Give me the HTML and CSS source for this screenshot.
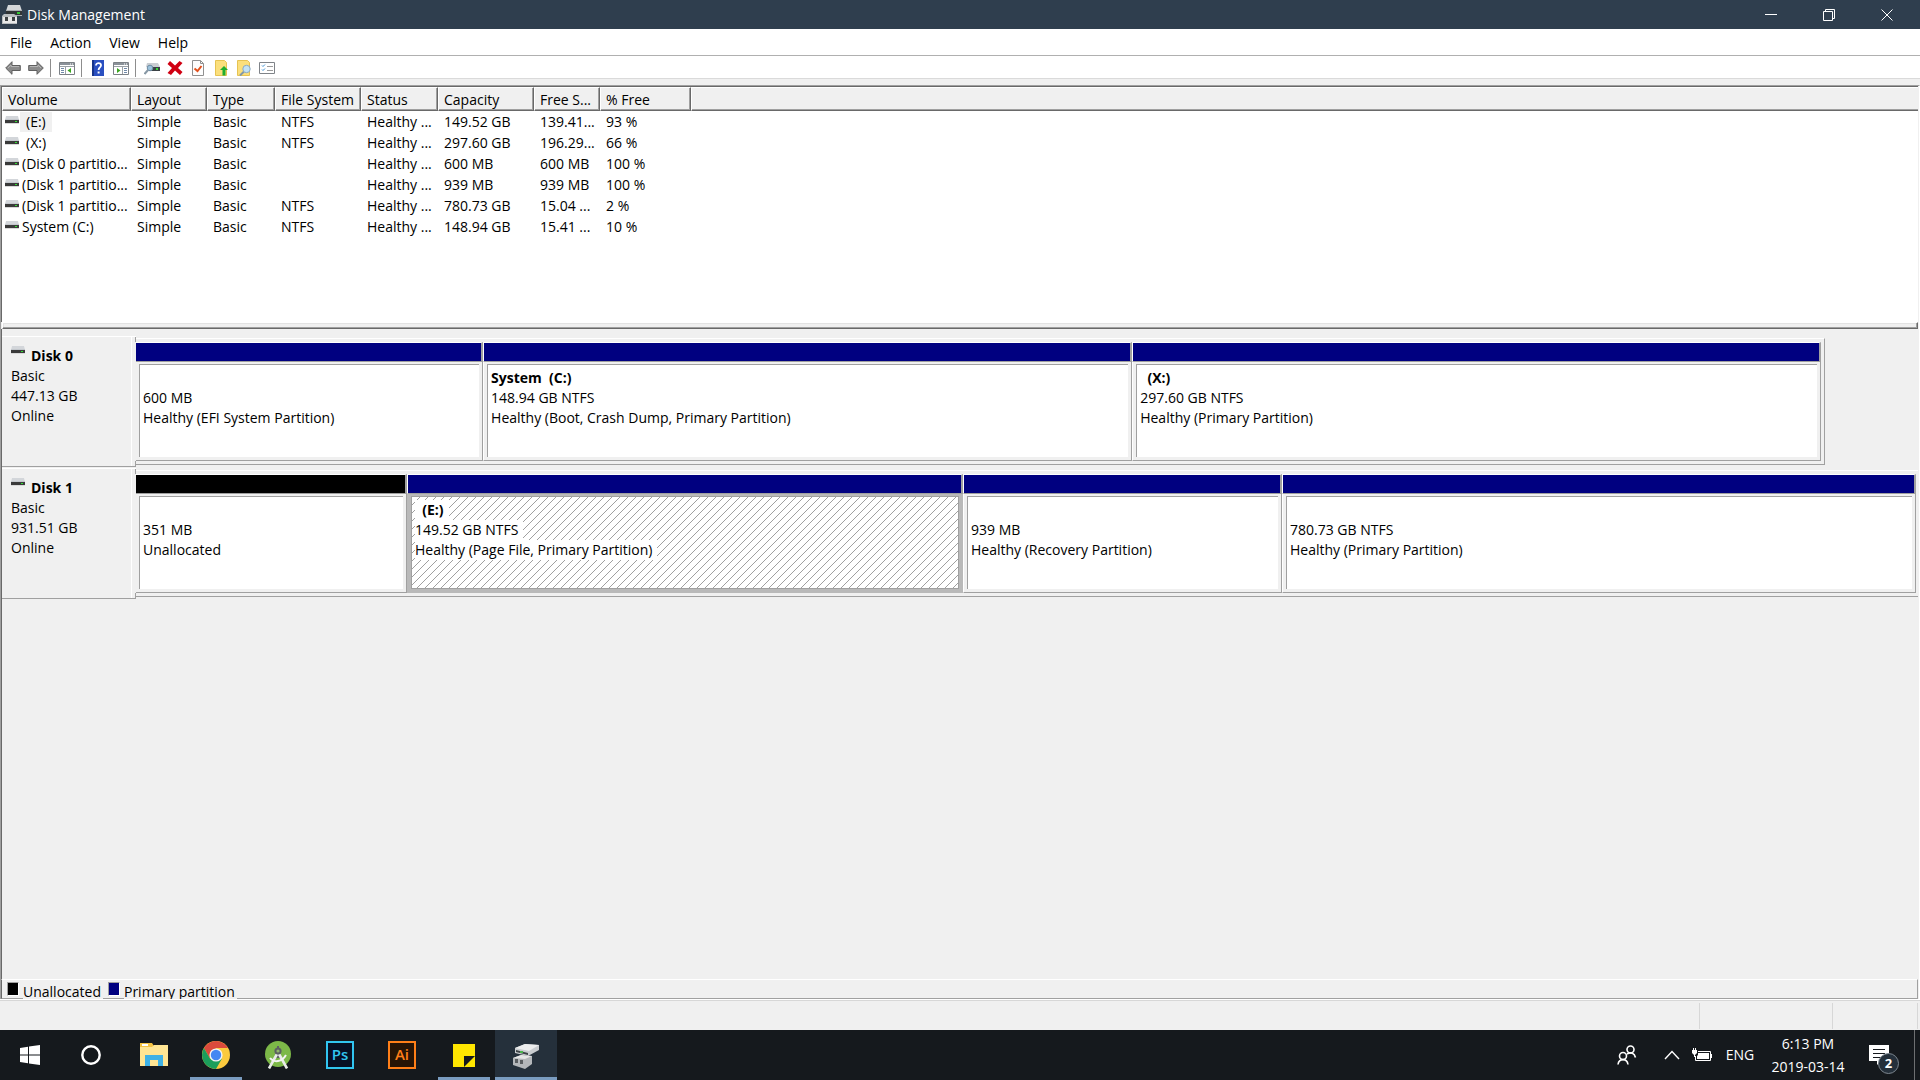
FILE: index.html
```
<!DOCTYPE html>
<html lang="en">

<head>
	<meta charset="utf-8">
	<title>Disk Management</title>
	<link rel="stylesheet" href="styles.css">
</head>

<body>

	<!-- shared drive icon -->
	<svg class="sprite" aria-hidden="true">
		<symbol id="drive" viewBox="0 0 14 8">
			<path d="M1 0h12l1 4H0z" fill="#d3d6da"/>
			<path d="M0 3h14v4H0z" fill="#3a3a3a"/>
			<path d="M0 3h14v1H0z" fill="#c4c8cd"/>
			<path d="M0 7h14v1H0z" fill="#d9d9d9"/>
			<path d="M10 5h2v1h-2z" fill="#32e032"/>
		</symbol>
	</svg>

	<header class="titlebar">
		<svg class="app-icon" viewBox="0 0 20 20">
			<path d="M6 0h12l2 6H4z" fill="#d4d7da"/>
			<path d="M4 5h16v5H4z" fill="#303436"/>
			<path d="M4 5h16v1H4zM14 10h6v1h-6z" fill="#a9adb0"/>
			<path d="M15 7h3v2h-3z" fill="#35c435"/>
			<path d="M2 9h10l3 2v8H0v-8z" fill="#b9bdc0"/>
			<path d="M1 12h14v6H1z" fill="#e8e8e8"/>
			<path d="M3 12h3v4H3zM10 12h3v4h-3z" fill="#3d4143"/>
		</svg>
		<h1>Disk Management</h1>
		<div class="win-controls">
			<button aria-label="Minimize"><svg viewBox="0 0 12 12"><path d="M0 5.5h12"/></svg></button>
			<button aria-label="Restore"><svg viewBox="0 0 12 12"><path d="M.5 2.500h9v9h-9zM2.500 2.500v-2h9v9h-2"/></svg></button>
			<button aria-label="Close"><svg viewBox="0 0 12 12"><path d="M.5.5l11 11M11.500.5l-11 11"/></svg></button>
		</div>
	</header>

	<nav class="menu">
		<button>File</button>
		<button>Action</button>
		<button>View</button>
		<button>Help</button>
	</nav>

	<div class="toolbar">
		<button aria-label="Back"><svg viewBox="0 0 16 16"><path d="M.7 8L7 1.700v3.800h8.300v5H7v3.800z" fill="#8c8c8c" stroke="#5f5f5f"/><path d="M3 8l3-3v1.500h8" fill="none" stroke="#b5b5b5"/></svg></button>
		<button aria-label="Forward"><svg viewBox="0 0 16 16"><path d="M15.300 8L9 1.700v3.800H.7v5H9v3.800z" fill="#8c8c8c" stroke="#5f5f5f"/><path d="M2 6.500h8V5l3 3" fill="none" stroke="#b5b5b5"/></svg></button>
		<span class="sep"></span>
		<button aria-label="Show or hide console tree"><svg viewBox="0 0 16 16"><path d="M.5 2.500h15v12H.5z" fill="#fff" stroke="#7c8186"/><path d="M1 3h14v2H1z" fill="#8b9299"/><path d="M1 6.500h14M6.500 7v7" stroke="#9aa0a6"/><path d="M2 8.500h3M2 10.500h3M2 12.500h3" stroke="#7189a8"/><path d="M12 8v5L8.500 10.500z" fill="#3aa520"/><path d="M11 4h1M13 4h1" stroke="#fff"/></svg></button>
		<span class="sep"></span>
		<button aria-label="Help"><svg viewBox="0 0 16 16"><path d="M2 0h12v16H2z" fill="#2a4fc0"/><path d="M2 0h2v16H2z" fill="#173489"/><path d="M6 5.500c0-3.500 5.500-3 5 0C10.800 7.500 8.600 7.500 8.600 10" fill="none" stroke="#fff" stroke-width="1.800"/><path d="M7.600 11.500h2v2h-2z" fill="#fff"/></svg></button>
		<button aria-label="Show or hide action pane"><svg viewBox="0 0 16 16"><path d="M.5 2.500h15v12H.5z" fill="#fff" stroke="#7c8186"/><path d="M1 3h14v2H1z" fill="#8b9299"/><path d="M1 6.500h14M9.500 7v7" stroke="#9aa0a6"/><path d="M11 8.500h3M11 10.500h3M11 12.500h3" stroke="#7189a8"/><path d="M4 8v5l3.500-2.500z" fill="#3aa520"/><path d="M11 4h1M13 4h1" stroke="#fff"/></svg></button>
		<span class="sep"></span>
		<button aria-label="Refresh"><svg viewBox="0 0 16 16"><path d="M3 3h11l2 4H2z" fill="#c9cdd2"/><path d="M5 7h11v4H5z" fill="#3b4145"/><path d="M12 8h2v2h-2z" fill="#36db36"/><circle cx="6" cy="8" r="2.800" fill="#9cc2dc" stroke="#6e8ca3"/><path d="M4 10l-3.500 4" stroke="#8798a5" stroke-width="2"/></svg></button>
		<button aria-label="Delete"><svg viewBox="0 0 16 16"><path d="M3 1l5 4.500L12.500 1l3 2L11 8l4.500 4-2.500 3-5-4.500L4 15l-3.500-2L5 8 .5 4z" fill="#d00012"/></svg></button>
		<button aria-label="Properties"><svg viewBox="0 0 16 16"><path d="M2.500.5h8l3 3v12h-11z" fill="#fdfdfd" stroke="#909090"/><path d="M10.500.5v3h3" fill="none" stroke="#909090"/><path d="M4.500 8.500l3 2.500 4-5" fill="none" stroke="#e2501c" stroke-width="2"/></svg></button>
		<button aria-label="Up"><svg viewBox="0 0 16 16"><path d="M2.500.5h9l2 2v13h-11z" fill="#fbdf7c" stroke="#e6c352"/><path d="M11 6l4 4h-2.500v5.500h-3V10H7z" fill="#1fae2d"/></svg></button>
		<button aria-label="Explore"><svg viewBox="0 0 16 16"><path d="M1.500.5h10l2 2v13h-12z" fill="#fbdf7c" stroke="#e6c352"/><path d="M8 11.500L4 15.500" stroke="#8298a8" stroke-width="2"/><circle cx="10.500" cy="9" r="3.700" fill="#c2e2f5" stroke="#8ba9bf"/></svg></button>
		<button aria-label="Settings list"><svg viewBox="0 0 16 16"><path d="M.5 2.500h15v11H.5z" fill="#fff" stroke="#7f8388"/><path d="M3 5.500l1 1 2-2M3 9.500l1 1 2-2" fill="none" stroke="#3d8fd1"/><path d="M8 6.500h6M8 10.500h6" stroke="#9a9a9a"/></svg></button>
	</div>

	<main class="console">

		<section class="volumes">
			<table>
				<colgroup>
					<col class="c-volume">
					<col class="c-layout">
					<col class="c-type">
					<col class="c-fs">
					<col class="c-status">
					<col class="c-capacity">
					<col class="c-space">
					<col class="c-free">
					<col>
				</colgroup>
				<thead>
					<tr><th>Volume</th><th>Layout</th><th>Type</th><th>File System</th><th>Status</th><th>Capacity</th><th>Free S...</th><th>% Free</th><th class="rest"></th></tr>
				</thead>
				<tbody>
					<tr><td><svg class="drive"><use href="#drive"/></svg><span class="letter selected">(E:)</span></td><td>Simple</td><td>Basic</td><td>NTFS</td><td>Healthy ...</td><td>149.52 GB</td><td>139.41...</td><td>93 %</td><td></td></tr>
					<tr><td><svg class="drive"><use href="#drive"/></svg><span class="letter">(X:)</span></td><td>Simple</td><td>Basic</td><td>NTFS</td><td>Healthy ...</td><td>297.60 GB</td><td>196.29...</td><td>66 %</td><td></td></tr>
					<tr><td><svg class="drive"><use href="#drive"/></svg><span>(Disk 0 partitio...</span></td><td>Simple</td><td>Basic</td><td></td><td>Healthy ...</td><td>600 MB</td><td>600 MB</td><td>100 %</td><td></td></tr>
					<tr><td><svg class="drive"><use href="#drive"/></svg><span>(Disk 1 partitio...</span></td><td>Simple</td><td>Basic</td><td></td><td>Healthy ...</td><td>939 MB</td><td>939 MB</td><td>100 %</td><td></td></tr>
					<tr><td><svg class="drive"><use href="#drive"/></svg><span>(Disk 1 partitio...</span></td><td>Simple</td><td>Basic</td><td>NTFS</td><td>Healthy ...</td><td>780.73 GB</td><td>15.04 ...</td><td>2 %</td><td></td></tr>
					<tr><td><svg class="drive"><use href="#drive"/></svg><span>System (C:)</span></td><td>Simple</td><td>Basic</td><td>NTFS</td><td>Healthy ...</td><td>148.94 GB</td><td>15.41 ...</td><td>10 %</td><td></td></tr>
				</tbody>
			</table>
		</section>

		<div class="splitter"></div>

		<section class="disks">

			<div class="disk">
				<div class="disk-label">
					<h2><svg class="drive"><use href="#drive"/></svg>Disk 0</h2>
					<p>Basic</p>
					<p>447.13 GB</p>
					<p>Online</p>
				</div>
				<div class="track">
					<div class="graph" style="width:94.8%">
						<div class="partition" style="flex-grow:347">
							<div class="bar"></div>
							<div class="body"><div class="info"><h3></h3><p>600 MB</p><p>Healthy (EFI System Partition)</p></div></div>
						</div>
						<div class="partition" style="flex-grow:649">
							<div class="bar"></div>
							<div class="body"><div class="info"><h3>System&nbsp; (C:)</h3><p>148.94 GB NTFS</p><p>Healthy (Boot, Crash Dump, Primary Partition)</p></div></div>
						</div>
						<div class="partition" style="flex-grow:689">
							<div class="bar"></div>
							<div class="body"><div class="info"><h3>&nbsp; (X:)</h3><p>297.60 GB NTFS</p><p>Healthy (Primary Partition)</p></div></div>
						</div>
					</div>
				</div>
			</div>

			<div class="disk">
				<div class="disk-label">
					<h2><svg class="drive"><use href="#drive"/></svg>Disk 1</h2>
					<p>Basic</p>
					<p>931.51 GB</p>
					<p>Online</p>
				</div>
				<div class="track">
					<div class="graph full">
						<div class="partition unallocated" style="flex-grow:271">
							<div class="bar"></div>
							<div class="body"><div class="info"><h3></h3><p>351 MB</p><p>Unallocated</p></div></div>
						</div>
						<div class="partition active" style="flex-grow:556">
							<div class="bar"></div>
							<div class="body"><div class="info"><h3>&nbsp; (E:)</h3><p>149.52 GB NTFS</p><p>Healthy (Page File, Primary Partition)</p></div></div>
						</div>
						<div class="partition" style="flex-grow:319">
							<div class="bar"></div>
							<div class="body"><div class="info"><h3></h3><p>939 MB</p><p>Healthy (Recovery Partition)</p></div></div>
						</div>
						<div class="partition" style="flex-grow:634">
							<div class="bar"></div>
							<div class="body"><div class="info"><h3></h3><p>780.73 GB NTFS</p><p>Healthy (Primary Partition)</p></div></div>
						</div>
					</div>
				</div>
			</div>

		</section>

		<div class="legend">
			<i class="swatch black"></i><span>Unallocated</span>
			<i class="swatch navy"></i><span>Primary partition</span>
		</div>

	</main>

	<div class="statusbar">
		<span class="s-main"></span>
		<span class="s-mid"></span>
		<span class="s-end"></span>
	</div>

	<footer class="taskbar">
		<button class="task" aria-label="Start"><svg viewBox="0 0 28 28"><path d="M4 7l8-1.200V13.500H4zM13 5.600L24 4v9.500H13zM4 14.500h8v7.700L4 21zM13 14.500h11V24l-11-1.600z" fill="#fff"/></svg></button>
		<button class="task" aria-label="Cortana"><svg viewBox="0 0 28 28"><circle cx="13" cy="14" r="8.700" fill="none" stroke="#fff" stroke-width="2.400"/></svg></button>
		<button class="task" aria-label="File Explorer"><svg viewBox="0 0 28 28"><path d="M0 2h12l2 3h14v20H0z" fill="#f5c342"/><path d="M2 3h6v2H2z" fill="#fff"/><path d="M0 6h12l2-2h14v21H0z" fill="#ffe593"/><path d="M5 25V14h18v11h-5v-6h-8v6z" fill="#3fb1e5"/></svg></button>
		<button class="task running" aria-label="Chrome"><svg viewBox="0 0 28 28"><circle cx="14" cy="14" r="14" fill="#fbca3e"/><path d="M1.900 7A14 14 0 0 1 26.100 7H14L8 17.500z" fill="#db4a3c"/><path d="M1.900 7A14 14 0 0 0 14 28l6-10.500H8z" fill="#1b9e5b"/><circle cx="14" cy="14" r="6.600" fill="#f3f3f3"/><circle cx="14" cy="14" r="5.200" fill="#4387f2"/></svg></button>
		<button class="task" aria-label="Android Studio"><svg viewBox="0 0 28 28"><circle cx="14" cy="13" r="13" fill="#7cb848"/><path d="M12 12h4l2 5h-8z" fill="#5c6062"/><path d="M13 13L5 27.500M15 13l8 14.500" stroke="#e9ece9" stroke-width="2.600"/><path d="M6 17c4 5 12 4 16-3" fill="none" stroke="#f4f4f4" stroke-width="2"/><path d="M13 5h2v3h-2z" fill="#5c6062"/><circle cx="14" cy="10" r="2.600" fill="#8fb56c" stroke="#5c6062" stroke-width="2"/></svg></button>
		<button class="task" aria-label="Photoshop"><span class="adobe ps">Ps</span></button>
		<button class="task" aria-label="Illustrator"><span class="adobe ai">Ai</span></button>
		<button class="task running" aria-label="Sticky Notes"><svg viewBox="0 0 28 28"><path d="M3 3h22v23H3z" fill="#ffe600"/><path d="M14 15h11L14 26z" fill="#15191d"/></svg></button>
		<button class="task running current" aria-label="Disk Management"><svg viewBox="0 0 28 28"><path d="M3 7L13 3l14 1v5l-11 6L3 12z" fill="#c9cccf"/><path d="M3 7l10-4 14 1-10 6z" fill="#eceded"/><path d="M4 9l12 3v2L4 11z" fill="#3d4447"/><path d="M8 10h3v2H8z" fill="#48b54a"/><path d="M1 17l8-3 11 1v8l-7 5-12-4z" fill="#b4b7ba"/><path d="M1 17l8-3 11 1-7 3z" fill="#e6e6e6"/><path d="M3 18h3v4H3zM8 19h3v4H8z" fill="#5a5e61"/></svg></button>

		<div class="tray">
			<button class="people" aria-label="People"><svg viewBox="0 0 20 20"><g fill="none" stroke="#fff" stroke-width="1.600"><circle cx="13.500" cy="4.500" r="3.500"/><path d="M10 9c4-2.500 7.500-.5 8.500 3.500"/><circle cx="6" cy="11" r="3.500"/><path d="M1 19.500c1-6.500 9-6.500 10 0"/></g></svg></button>
			<button class="chevron" aria-label="Show hidden icons"><svg viewBox="0 0 16 10"><path d="M1 9l7-7.500L15 9" fill="none" stroke="#fff" stroke-width="1.400"/></svg></button>
			<button class="battery" aria-label="Battery"><svg viewBox="0 0 20 14"><path d="M6 3.500h12.500v9h-15V8" fill="none" stroke="#fff"/><path d="M6 5h11v6H5V8l1-1zM19 6h1v4h-1z" fill="#fff"/><path d="M1 0h1v2h1V0h1v2h1v3L3 7v2H2V7L0 5V2h1z" fill="#fff"/></svg></button>
			<button class="lang">ENG</button>
			<button class="clock"><time>6:13 PM</time><time>2019-03-14</time></button>
			<button class="notes" aria-label="Notifications">
				<svg viewBox="0 0 20 20"><path d="M0 0h20v16h-8l-4 4v-4H0z" fill="#fff"/><path d="M4 4.500h12M4 8.500h12M4 12.500h8" stroke="#15191d"/></svg>
				<span class="badge">2</span>
			</button>
			<span class="desktop"></span>
		</div>
	</footer>

</body>

</html>
```
FILE: styles.css
```
* {
	box-sizing: border-box;
}

body {
	margin: 0;
	height: 100vh;
	display: flex;
	flex-direction: column;
	background: #f0f0f0;
	color: #000;
	font-family: "Open Sans", "Noto Sans", sans-serif;
	font-size: 14px;
	line-height: 20px;
	overflow: hidden;
}

h1, h2, h3, p {
	margin: 0;
	font-size: inherit;
}

button {
	border: none;
	padding: 0;
	background: none;
	color: inherit;
	font: inherit;
}

svg {
	display: block;
}

.sprite {
	position: absolute;
	width: 0;
	height: 0;
}

.drive {
	width: 14px;
	height: 8px;
	flex: none;
}

/* title bar */

.titlebar {
	display: flex;
	align-items: center;
	height: 29px;
	flex: none;
	padding-left: 2px;
	background: #2f3e4e;
	color: #fff;
}

.titlebar h1 {
	font-weight: normal;
	margin-left: 5px;
}

.app-icon {
	width: 20px;
	height: 20px;
}

.win-controls {
	display: flex;
	margin-left: auto;
	padding-right: 4px;
}

.win-controls button {
	width: 58px;
	height: 29px;
	display: flex;
	align-items: center;
	justify-content: center;
}

.win-controls svg {
	width: 12px;
	height: 12px;
	fill: none;
	stroke: #fff;
}

/* menu and toolbar */

.menu {
	display: flex;
	flex: none;
	gap: 18px;
	height: 27px;
	padding: 1px 10px 0;
	background: #fff;
	border-bottom: 1px solid #b0b0b0;
}

.toolbar {
	display: flex;
	flex: none;
	align-items: center;
	height: 23px;
	padding: 2px 0 0 1px;
	background: #fff;
	border-bottom: 1px solid #dadada;
}

.toolbar button {
	width: 23px;
	display: flex;
	justify-content: center;
}

.toolbar svg {
	width: 16px;
	height: 16px;
}

.sep {
	width: 1px;
	height: 18px;
	margin: 0 4px 0 3px;
	background: #8d8d8d;
}

/* volume list */

.console {
	flex: 1;
	display: flex;
	flex-direction: column;
	margin-top: 6px;
	border-top: 1px solid #a0a0a0;
	border-left: 1px solid #a0a0a0;
	border-right: 1px solid #fff;
	padding-right: 1px;
}

.volumes {
	height: 236px;
	flex: none;
	background: #fff;
	border-top: 1px solid #696969;
	border-left: 1px solid #696969;
}

table {
	width: 100%;
	table-layout: fixed;
	border-collapse: separate;
	border-spacing: 0;
}

.c-volume { width: 129px; }
.c-layout { width: 76px; }
.c-type { width: 68px; }
.c-fs { width: 86px; }
.c-status { width: 77px; }
.c-capacity { width: 96px; }
.c-space { width: 66px; }
.c-free { width: 91px; }

th {
	height: 24px;
	padding: 2px 0 0 5px;
	background: #f0f0f0;
	border: 1px solid;
	border-color: #fff #696969 #696969 #fff;
	box-shadow: inset -1px -1px #a0a0a0;
	font-weight: normal;
	text-align: left;
	white-space: nowrap;
}

th.rest {
	border-right: none;
	box-shadow: inset 0 -1px #a0a0a0;
}

td {
	height: 21px;
	padding: 0 0 0 6px;
	white-space: nowrap;
}

td:first-child {
	padding-left: 3px;
}

td .drive {
	display: inline-block;
	vertical-align: 3px;
	margin-right: 1px;
}

td span {
	display: inline-block;
	padding: 0 2px;
}

td .letter {
	padding: 0 6px;
}

.selected {
	background: #f0f0f0;
}

.splitter {
	height: 7px;
	flex: none;
	margin-left: 1px;
	border: 1px solid #fff;
	border-color: #fff #696969 #696969 #fff;
	box-shadow: inset -1px -1px #a0a0a0, inset 1px 1px #e3e3e3;
}

/* disks */

.disks {
	flex: 1;
	padding-top: 7px;
	border-left: 1px solid #696969;
}

.disk {
	display: flex;
	height: 132px;
}

.disk-label {
	width: 134px;
	height: 131px;
	flex: none;
	padding: 9px 0 0 9px;
	border-top: 1px solid #fff;
	border-bottom: 1px solid #a0a0a0;
	background:
		linear-gradient(#a0a0a0, #a0a0a0) right top / 1px 5px no-repeat,
		linear-gradient(#a0a0a0, #a0a0a0) right bottom / 1px 5px no-repeat,
		linear-gradient(#fff, #fff) 129px 0 / 1px 100% no-repeat;
}

.disk-label h2 {
	display: flex;
	gap: 6px;
}

.track {
	flex: 1;
	min-width: 0;
}

.graph {
	display: flex;
	height: 127px;
	margin-top: 2px;
	padding: 3px 3px 3px 0;
	border-top: 1px solid #fff;
	border-right: 1px solid #a0a0a0;
	border-bottom: 1px solid #a0a0a0;
}

.graph.full {
	padding-right: 2px;
	border-right: none;
}

.partition {
	flex: 0 1 0;
	min-width: 0;
	display: flex;
	flex-direction: column;
	white-space: nowrap;
}

.bar {
	height: 20px;
	background: #000080;
	border-top: 1px solid #fff;
	border-right: 2px solid #a0a0a0;
	border-left: 1px solid #fff;
	border-bottom: 1px solid #a0a0a0;
}

.unallocated .bar {
	background: #000;
}

.body {
	flex: 1;
	padding: 2px 3px 3px;
	border-right: 1px solid #a0a0a0;
	border-bottom: 1px solid #a0a0a0;
	border-left: 1px solid #fff;
}

.partition:first-child .bar,
.partition:first-child .body {
	border-left: none;
}

.info {
	height: 100%;
	padding: 3px 3px 0;
	overflow: hidden;
	background: #fff;
	border-top: 1px solid #a0a0a0;
	border-left: 1px solid #a0a0a0;
}

.info h3 {
	height: 20px;
}

.active .body {
	background: #b9b9b9;
	border-color: #b9b9b9;
}

.active .info {
	border: 1px solid #a0a0a0;
	background: #fff linear-gradient(135deg, #fff 46%, #a0a0a0 46%, #a0a0a0 54%, #fff 54%) 0 0 / 8px 8px;
}

.active h3, .active p {
	width: fit-content;
	padding-right: 5px;
	background: #fff;
}

/* legend and status */

.legend {
	display: flex;
	flex: none;
	height: 20px;
	padding-left: 5px;
	border: 1px solid;
	border-color: #fff #a0a0a0 #a0a0a0 #696969;
}

.legend span {
	height: 20px;
	margin: 1px 5px 0 4px;
	padding-right: 2px;
	line-height: 22px;
	background: #f0f0f0;
}

.swatch {
	width: 12px;
	height: 14px;
	margin-top: 2px;
	border: 1px solid;
	border-color: #a0a0a0 #fff #fff #a0a0a0;
}

.black { background: #000; }
.navy { background: #000080; }

.statusbar {
	display: flex;
	flex: none;
	height: 31px;
	padding: 3px 2px 1px 0;
	border-top: 1px solid #fff;
	box-shadow: inset 0 1px #d7d7d7;
}

.statusbar span {
	border-right: 1px solid #d7d7d7;
}

.s-main { flex: 1; }
.s-mid { width: 133px; }
.s-end { width: 85px; }

/* taskbar */

.taskbar {
	display: flex;
	flex: none;
	height: 50px;
	background: #15191d;
	color: #fff;
}

.task {
	width: 52px;
	margin-right: 10px;
	display: flex;
	align-items: center;
	justify-content: center;
	border-bottom: 3px solid transparent;
	padding-top: 2px;
}

.task:first-child {
	margin-left: 4px;
}

.task svg {
	width: 28px;
	height: 28px;
}

.running {
	border-bottom-color: #7a9cc0;
}

.current {
	width: 62px;
	margin: 0 0 0 -5px;
	background: #25303b;
}

.adobe {
	width: 28px;
	height: 28px;
	border: 2px solid;
	font-size: 15px;
	font-weight: 600;
	line-height: 23px;
	text-align: center;
}

.ps {
	color: #31c5f0;
	background: #071024;
}

.ai {
	color: #ff7f18;
	background: #271405;
}

.tray {
	display: flex;
	align-items: center;
	margin-left: auto;
}

.tray button {
	display: flex;
	justify-content: center;
}

.people { width: 50px; }
.people svg { width: 20px; height: 20px; }
.chevron { width: 40px; }
.chevron svg { width: 16px; height: 10px; }
.battery { width: 20px; }
.battery svg { width: 20px; height: 14px; }
.lang { width: 56px; }

.tray .clock {
	width: 80px;
	margin-right: 21px;
	flex-direction: column;
	align-items: center;
	line-height: 23px;
}

.tray .notes {
	position: relative;
	width: 30px;
	margin-right: 15px;
	justify-content: flex-start;
}

.notes svg {
	width: 20px;
	height: 20px;
}

.badge {
	position: absolute;
	left: 9px;
	top: 8px;
	width: 21px;
	height: 21px;
	border: 1px solid #7d8790;
	border-radius: 50%;
	background: #25303b;
	font-size: 13px;
	font-weight: bold;
	line-height: 19px;
	text-align: center;
}

.desktop {
	width: 6px;
	height: 50px;
	border-left: 1px solid #6d6f71;
}
```
